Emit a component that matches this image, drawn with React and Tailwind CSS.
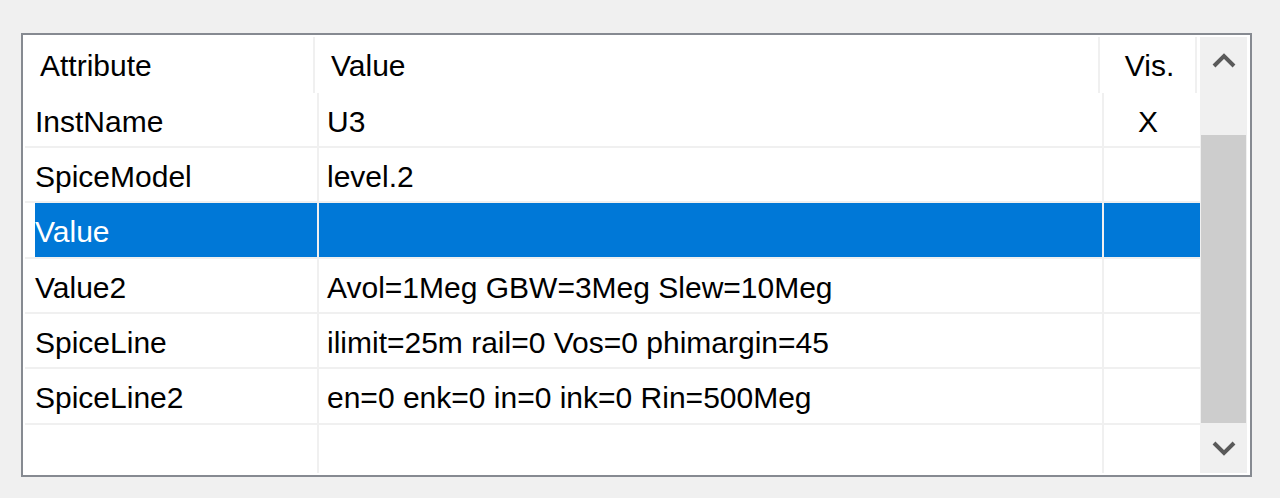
const rows = [
  { attr: 'InstName', value: 'U3', vis: 'X', h: 'h-[55px]' },
  { attr: 'SpiceModel', value: 'level.2', vis: '', h: 'h-[55px]' },
  { attr: 'Value', value: '', vis: '', selected: true, h: 'h-[56px]' },
  { attr: 'Value2', value: 'Avol=1Meg GBW=3Meg Slew=10Meg', vis: '', h: 'h-[55px]' },
  { attr: 'SpiceLine', value: 'ilimit=25m rail=0 Vos=0 phimargin=45', vis: '', h: 'h-[55px]' },
  { attr: 'SpiceLine2', value: 'en=0 enk=0 in=0 ink=0 Rin=500Meg', vis: '', h: 'h-[56px]' },
  { attr: '', value: '', vis: '', h: 'h-[55px]' },
]

function Chevron({ down }) {
  return (
    <svg width="26" height="20" viewBox="0 0 26 20">
      <polyline
        points={down ? '3,5 13,15 23,5' : '3,15 13,5 23,15'}
        fill="none"
        stroke="#5a5a5a"
        strokeWidth="4"
      />
    </svg>
  )
}

export default function App() {
  return (
    <div
      className="h-[498px] w-[1280px] bg-[#f0f0f0] pt-[33px] pl-[21px] overflow-hidden"
      style={{ fontFamily: '"Liberation Sans", Arial, sans-serif' }}
    >
      <div className="flex h-[444px] w-[1231px] border-2 border-[#868a91] bg-white pt-[2px] pb-[2px] pl-[2px] pr-[3px]">
        {/* Grid */}
        <div className="flex w-[1175px] flex-col overflow-hidden text-[30px] text-black">
          {/* Header */}
          <div className="flex h-[56px] shrink-0 items-center">
            <div className="flex h-full w-[290px] items-center border-r-2 border-[#f0f0f0] pl-[15px]">Attribute</div>
            <div className="flex h-full w-[785px] items-center border-r-2 border-[#f0f0f0] pl-[16px]">Value</div>
            <div className="flex h-full w-[97px] items-center justify-center border-r-2 border-[#f0f0f0] pl-[4px]">Vis.</div>
          </div>

          {/* Rows */}
          {rows.map((r, i) => (
            <div key={i} className={`flex shrink-0 border-b-2 border-[#f0f0f0] ${r.h}`}>
              <div className="flex h-full w-[294px] border-r-2 border-[#f0f0f0] pl-[10px]">
                <div className={`flex h-full flex-1 items-center pt-[3px] ${r.selected ? 'bg-[#0078d7] text-white' : ''}`}>
                  {r.attr}
                </div>
              </div>
              <div className={`flex h-full w-[785px] items-center border-r-2 border-[#f0f0f0] pl-[8px] pt-[3px] ${r.selected ? 'bg-[#0078d7] text-white' : ''}`}>
                {r.value}
              </div>
              <div className={`flex h-full w-[96px] items-center justify-center pr-[8px] pt-[3px] ${r.selected ? 'bg-[#0078d7] text-white' : ''}`}>
                {r.vis}
              </div>
            </div>
          ))}
        </div>

        {/* Scrollbar */}
        <div className="flex w-[47px] shrink-0 flex-col bg-[#f0f0f0]">
          <div className="flex h-[48px] shrink-0 items-center justify-center">
            <Chevron />
          </div>
          <div className="h-[50px] shrink-0" />
          <div className="mx-[1px] h-[288px] shrink-0 bg-[#cdcdcd]" />
          <div className="flex flex-1 items-center justify-center">
            <Chevron down />
          </div>
        </div>
      </div>
    </div>
  )
}
